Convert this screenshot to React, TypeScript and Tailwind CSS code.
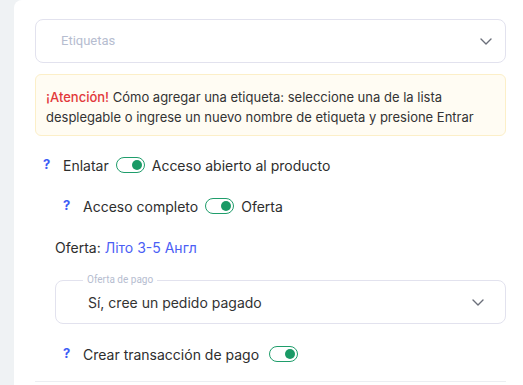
// Panel de etiquetas y accesos
const font = { fontFamily: "Inter, 'Liberation Sans', sans-serif" };
const narrow = { fontFamily: "Roboto, 'Liberation Sans', sans-serif" };

function Chevron({ className }: { className?: string }) {
  return (
    <svg className={className} width="12" height="7" viewBox="0 0 12 7" fill="none">
      <path d="M1 1l5 5 5-5" stroke="#6b6f7a" strokeWidth="1.4" strokeLinecap="round" strokeLinejoin="round" />
    </svg>
  );
}

function Toggle() {
  return (
    <span className="inline-flex items-center justify-end w-[29px] h-[16px] rounded-full border-[1.5px] border-[#1f9d6b] bg-white px-[2px]">
      <span className="block w-[10px] h-[10px] rounded-full bg-[#1a9a66]" />
    </span>
  );
}

function Help() {
  return <span className="inline-block w-[20px] text-[13px] font-bold text-[#3d5cf5]">?</span>;
}

export default function App() {
  return (
    <div className="w-[523px] h-[385px] overflow-hidden bg-[#eff2f4] pl-[14px]" style={font}>
      <div className="h-full bg-white rounded-tl-[8px] pl-[21px] pr-[17px] pt-[19px] text-[14px] text-[#2e2e2e]">
        {/* Selector de etiquetas */}
        <div className="h-[44px] rounded-[8px] border border-[#e2e2ee] flex items-center justify-between pl-[25px] pr-[13px]">
          <span className="text-[13px] text-[#b6bdd0]" style={narrow}>Etiquetas</span>
          <Chevron />
        </div>

        {/* Aviso */}
        <div className="mt-[11px] h-[62px] rounded-[6px] border border-[#fcefc8] bg-[#fffcf3] px-[10px] pt-[12px] text-[13px] leading-[20px] text-[#333]">
          <span className="font-medium text-[#e2383a]">¡Atención!</span> Cómo agregar una etiqueta: seleccione una de la lista desplegable o ingrese un nuevo nombre de etiqueta y presione Entrar
        </div>

        <div className="mt-[17px] h-[24px] flex items-center pl-[8px]">
          <Help />
          <span>Enlatar</span>
          <span className="mx-[7px] flex"><Toggle /></span>
          <span>Acceso abierto al producto</span>
        </div>

        <div className="pl-[20px]">
          <div className="mt-[17px] h-[24px] flex items-center pl-[8px]">
            <Help />
            <span>Acceso completo</span>
            <span className="mx-[7px] flex"><Toggle /></span>
            <span>Oferta</span>
          </div>

          <div className="mt-[17px] h-[24px] flex items-center">
            <span>Oferta:</span>
            <span className="ml-[4px] text-[#4b5ef5]">Літо 3-5 Англ</span>
          </div>

          {/* Selector de pago */}
          <div className="relative mt-[21px] h-[44px] rounded-[8px] border border-[#e2e2ee] flex items-center justify-between pl-[32px] pr-[21px]">
            <span className="absolute -top-[7px] left-[27px] bg-white px-[4px] text-[10px] leading-[12px] text-[#b6bdd0]" style={narrow}>Oferta de pago</span>
            <span className="text-[14px] text-[#333] mt-[1px]">Sí, cree un pedido pagado</span>
            <Chevron />
          </div>

          <div className="mt-[18px] h-[24px] flex items-center pl-[8px]">
            <Help />
            <span>Crear transacción de pago</span>
            <span className="ml-[10px] flex"><Toggle /></span>
          </div>
        </div>

        <div className="mt-[15px] border-t border-[#eceef2]" />
      </div>
    </div>
  );
}
